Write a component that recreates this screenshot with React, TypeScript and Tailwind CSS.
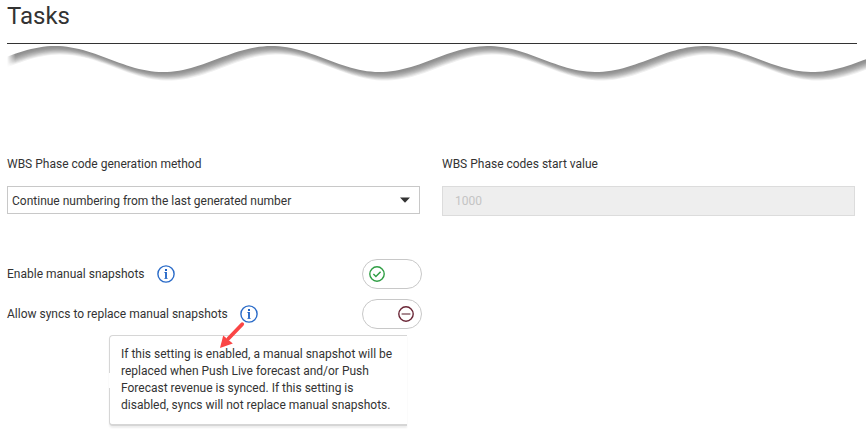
import { useState } from "react"

const WAVE_WIDTH = 859
const SHADOW_STEPS = [9, 8, 7, 6, 5, 4, 3, 2, 1]
const SHADOW_COLORS = ["#f0f0f0", "#dfdfdf", "#cecece", "#bebebe", "#b0b0b0", "#a4a4a4", "#9a9a9a", "#939393", "#8f8f8f"]

// area above the torn edge, closed along the top
function buildWave() {
  let d = "M-20 -20"
  for (let x = -20; x <= WAVE_WIDTH + 20; x += 4) {
    const y = 15 - 13 * Math.cos(((x - 48) / 216.4) * Math.PI * 2)
    d += ` L${x} ${y.toFixed(2)}`
  }
  return d + ` L${WAVE_WIDTH + 20} -20 Z`
}

function TornEdge() {
  const wave = buildWave()
  return (
    <svg className="block h-10 w-full" viewBox={`0 0 ${WAVE_WIDTH} 40`} preserveAspectRatio="none" aria-hidden="true">
      <defs>
        <linearGradient id="tip">
          <stop offset="0" stopColor="#fff" />
          <stop offset="0.01" stopColor="#fff" stopOpacity="0" />
        </linearGradient>
      </defs>
      {SHADOW_STEPS.map((step, i) => (
        <path key={step} d={wave} fill={SHADOW_COLORS[i]} transform={`translate(${step * 0.6} ${step * 0.95})`} />
      ))}
      <path d={wave} fill="#fff" />
      <rect width={WAVE_WIDTH} height="40" fill="url(#tip)" />
    </svg>
  )
}

function InfoButton({ label, describedBy }: { label: string; describedBy?: string }) {
  return (
    <button type="button" aria-label={label} aria-describedby={describedBy} className="ml-3 block">
      <svg className="block h-[18px] w-[18px]" viewBox="0 0 18 18" fill="none">
        <circle cx="9" cy="9" r="8.1" stroke="#2a6bc8" strokeWidth="1.4" />
        <path d="M7.4 7.5H9" stroke="#2a6bc8" />
        <path d="M9 7v6.5" stroke="#1d62c6" strokeWidth="1.8" />
        <path d="M7.4 13.5h3.2" stroke="#2a6bc8" strokeWidth="0.8" />
        <rect x="8" y="4" width="2" height="2" fill="#1d62c6" />
      </svg>
    </button>
  )
}

function Toggle({ id, defaultOn }: { id: string; defaultOn: boolean }) {
  const [on, setOn] = useState(defaultOn)
  return (
    <span className="relative ml-auto flex h-[30px] w-[60px] items-center rounded-full border border-[#c8c8c8] bg-white pl-[6px] pr-[7px]">
      <input
        id={id}
        type="checkbox"
        role="switch"
        checked={on}
        onChange={(e) => setOn(e.target.checked)}
        className="absolute inset-0 m-0 h-full w-full cursor-pointer appearance-none rounded-full"
      />
      {on ? (
        <svg className="h-4 w-4" viewBox="0 0 16 16" fill="none" stroke="#2f9e44" strokeWidth="1.4">
          <circle cx="8" cy="8" r="7.2" />
          <path d="M4.4 8.1l2.5 2.5 4.7-4.9" />
        </svg>
      ) : (
        <svg className="ml-auto h-4 w-4" viewBox="0 0 16 16" fill="none" stroke="#6b2737">
          <circle cx="8" cy="8" r="7.2" strokeWidth="1.4" />
          <path d="M3.6 8h8.8" strokeWidth="1.4" stroke="#855a64" />
        </svg>
      )}
    </span>
  )
}

export default function App() {
  return (
    <main className="min-h-screen overflow-hidden bg-white pl-[7px] font-['Roboto',sans-serif] text-xs text-[#333]">
      <h1 className="mr-[9px] h-11 border-b border-[#333] text-2xl">Tasks</h1>
      <TornEdge />

      <form className="mr-[11px] mt-[72px]">
        <div className="grid grid-cols-2 gap-[22px]">
          <div>
            <label htmlFor="method" className="block h-[30px] leading-4">
              WBS Phase code generation method
            </label>
            <div className="relative">
              <select
                id="method"
                className="block h-7 w-full appearance-none border border-[#c8c8c8] bg-white pl-1 pr-8 pt-px"
              >
                <option>Continue numbering from the last generated number</option>
              </select>
              <svg className="pointer-events-none absolute right-[10px] top-[11px] h-[6px] w-[10px]" viewBox="0 0 10 6">
                <path d="M0 0.5h10L5 5.7z" fill="#333" />
              </svg>
            </div>
          </div>
          <div>
            <label htmlFor="start" className="block h-[30px] leading-4">
              WBS Phase codes start value
            </label>
            <input
              id="start"
              type="text"
              defaultValue="1000"
              disabled
              className="block h-[30px] w-full border border-[#dcdcdc] bg-[#eee] px-3 text-[#c4c4c4]"
            />
          </div>
        </div>

        <div className="relative mt-[43px] flex w-[415px] flex-col gap-[10px]">
          <div className="flex h-[30px] items-center">
            <label htmlFor="snapshots">Enable manual snapshots</label>
            <InfoButton label="About manual snapshots" />
            <Toggle id="snapshots" defaultOn />
          </div>
          <div className="flex h-[30px] items-center">
            <label htmlFor="syncs">Allow syncs to replace manual snapshots</label>
            <InfoButton label="About replacing snapshots" describedBy="syncs-tip" />
            <Toggle id="syncs" defaultOn={false} />
          </div>

          <div
            id="syncs-tip"
            role="tooltip"
            className="absolute left-[102px] top-[76px] w-[298px] rounded-l border border-b-2 border-r-0 border-[#d6d6d6] bg-white py-[10px] pl-[11px] pr-2 leading-[17px] shadow-[0_2px_2px_#eeeeee]"
          >
            <span className="absolute -left-px top-[37px] h-[15px] w-px bg-white" />
            If this setting is enabled, a manual snapshot will be replaced when Push Live forecast and/or Push Forecast
            revenue is synced. If this setting is disabled, syncs will not replace manual snapshots.
          </div>
          <svg className="pointer-events-none absolute left-[210px] top-[60px] h-8 w-8" viewBox="0 0 32 32" aria-hidden="true">
            <path d="M25.2 5.2L11.5 19.5" stroke="#fa4545" strokeWidth="3.8" strokeLinecap="round" />
            <path d="M3 29L6.2 16.6L15.8 24.4z" fill="#fa4545" />
          </svg>
        </div>
      </form>
    </main>
  )
}
